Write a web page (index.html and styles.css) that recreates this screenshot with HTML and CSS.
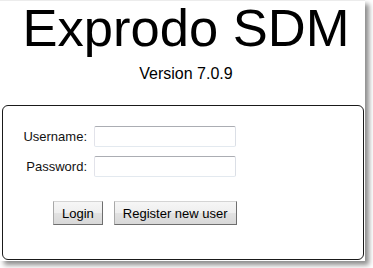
FILE: index.html
```html
<!DOCTYPE html>
<html>
<head>
<meta charset="utf-8">
<title>Exprodo SDM</title>
<link rel="stylesheet" href="styles.css">
</head>
<body>
<div class="frame">
  <header class="header">
    <h1 class="title">Exprodo SDM</h1>
    <div class="version">Version 7.0.9</div>
  </header>
  <form class="panel">
    <div class="fields">
      <label class="label" for="u">Username:</label>
      <input class="input" id="u" type="text">
      <label class="label" for="p">Password:</label>
      <input class="input" id="p" type="password">
    </div>
    <div class="buttons">
      <button type="button" class="btn">Login</button>
      <button type="button" class="btn">Register new user</button>
    </div>
  </form>
</div>
</body>
</html>
```
FILE: styles.css
```css
html, body {
  margin: 0;
  padding: 0;
  background: #ffffff;
}
body {
  font-family: "Liberation Sans", Arial, sans-serif;
  color: #000;
  width: 373px;
  height: 268px;
  overflow: hidden;
}
.frame {
  width: 365px;
  height: 261px;
  background: #fff;
  box-shadow: inset 0 1px 0 #ececec, 4px 4px 5px rgba(0, 0, 0, 0.45);
  display: flex;
  flex-direction: column;
}
.header {
  padding-left: 7px;
  text-align: center;
}
.title {
  margin: 2px 0 0;
  font-size: 52.5px;
  line-height: 52px;
  font-weight: normal;
}
.version {
  margin-top: 11px;
  font-size: 16px;
  line-height: 18px;
}
.panel {
  margin: 22px 0 0 2px;
  width: 362px;
  height: 155px;
  box-sizing: border-box;
  border: 1px solid #1a1a1a;
  border-radius: 6px;
  padding-top: 20px;
}
.fields {
  display: grid;
  grid-template-columns: 84px 142px;
  column-gap: 7px;
  row-gap: 9px;
  align-items: center;
}
.label {
  text-align: right;
  font-size: 13px;
  line-height: 15px;
  color: #111;
}
.input {
  box-sizing: border-box;
  width: 142px;
  height: 21px;
  margin: 0;
  padding: 0 3px;
  border: 1px solid;
  border-color: #abadb3 #dbdfe6 #e3e9ef #e2e3ea;
  border-radius: 2px;
  background: #fff;
  font-family: inherit;
  font-size: 13px;
}
.buttons {
  display: flex;
  gap: 11px;
  margin: 24px 0 0 50px;
}
.btn {
  height: 24px;
  margin: 0;
  padding: 0 8px;
  border: 1px solid;
  border-color: #d4d4d4 #6e6e6e #6e6e6e #a8a8a8;
  border-radius: 0;
  background: linear-gradient(#f6f6f6 0%, #eeeeee 50%, #e2e2e2 51%, #d8d8d8 100%);
  font-family: inherit;
  font-size: 13px;
  color: #000;
}
```
